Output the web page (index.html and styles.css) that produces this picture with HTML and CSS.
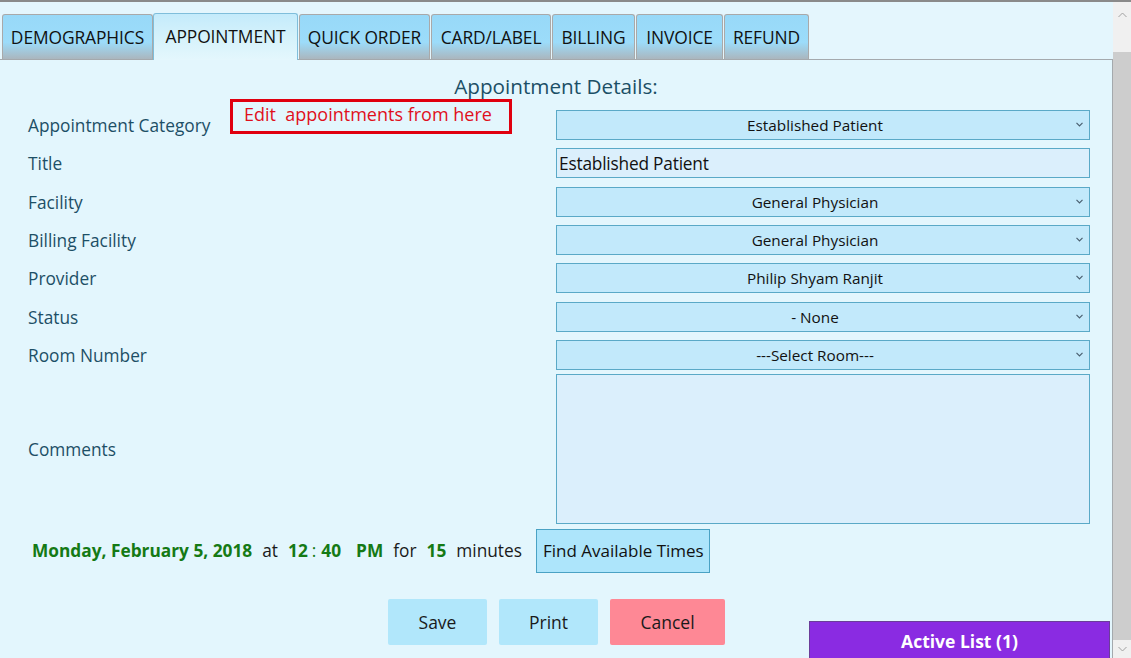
FILE: index.html
```html
<!DOCTYPE html>
<html>
<head>
<meta charset="utf-8">
<link rel="stylesheet" href="styles.css">
</head>
<body>
<div class="window">
  <div class="main">
    <div class="tabs">
      <div class="tab t-demo">DEMOGRAPHICS</div>
      <div class="tab active t-appt">APPOINTMENT</div>
      <div class="tab t-quick">QUICK ORDER</div>
      <div class="tab t-card">CARD/LABEL</div>
      <div class="tab t-bill">BILLING</div>
      <div class="tab t-inv">INVOICE</div>
      <div class="tab t-ref">REFUND</div>
    </div>
    <div class="panel">
      <h1 class="heading">Appointment Details:</h1>
      <div class="note">Edit&nbsp; appointments from here</div>
      <div class="form">
        <div class="label">Appointment Category</div>
        <div class="field select"><span>Established Patient</span><svg class="chev" width="7" height="5" viewBox="0 0 7 5"><path d="M0.5 0.8 L3.5 3.8 L6.5 0.8" fill="none" stroke="#4a6070" stroke-width="1.2"/></svg></div>

        <div class="label">Title</div>
        <div class="field text">Established Patient</div>

        <div class="label">Facility</div>
        <div class="field select"><span>General Physician</span><svg class="chev" width="7" height="5" viewBox="0 0 7 5"><path d="M0.5 0.8 L3.5 3.8 L6.5 0.8" fill="none" stroke="#4a6070" stroke-width="1.2"/></svg></div>

        <div class="label">Billing Facility</div>
        <div class="field select"><span>General Physician</span><svg class="chev" width="7" height="5" viewBox="0 0 7 5"><path d="M0.5 0.8 L3.5 3.8 L6.5 0.8" fill="none" stroke="#4a6070" stroke-width="1.2"/></svg></div>

        <div class="label">Provider</div>
        <div class="field select"><span>Philip Shyam Ranjit</span><svg class="chev" width="7" height="5" viewBox="0 0 7 5"><path d="M0.5 0.8 L3.5 3.8 L6.5 0.8" fill="none" stroke="#4a6070" stroke-width="1.2"/></svg></div>

        <div class="label">Status</div>
        <div class="field select"><span>- None</span><svg class="chev" width="7" height="5" viewBox="0 0 7 5"><path d="M0.5 0.8 L3.5 3.8 L6.5 0.8" fill="none" stroke="#4a6070" stroke-width="1.2"/></svg></div>

        <div class="label">Room Number</div>
        <div class="field select"><span>---Select Room---</span><svg class="chev" width="7" height="5" viewBox="0 0 7 5"><path d="M0.5 0.8 L3.5 3.8 L6.5 0.8" fill="none" stroke="#4a6070" stroke-width="1.2"/></svg></div>

        <div class="label comments-label">Comments</div>
        <div class="field area"></div>
      </div>
      <div class="when">
        <b class="g">Monday, February 5, 2018</b>
        <span>at</span>
        <b class="g">12</b><span class="colon">:</span><b class="g">40</b>
        <b class="g pm">PM</b>
        <span>for</span>
        <b class="g">15</b>
        <span class="last">minutes</span>
        <div class="find">Find Available Times</div>
      </div>
      <div class="actions">
        <div class="btn blue">Save</div>
        <div class="btn blue">Print</div>
        <div class="btn red">Cancel</div>
      </div>
      <div class="active-list">Active List (1)</div>
    </div>
  </div>
  <div class="scrollbar">
    <div class="sb-btn up"><svg width="9" height="6" viewBox="0 0 9 6"><path d="M0.5 5 L4.5 1 L8.5 5" fill="none" stroke="#a0a0a0" stroke-width="1"/></svg></div>
    <div class="sb-thumb"></div>
    <div class="sb-btn down"><svg width="9" height="6" viewBox="0 0 9 6"><path d="M0.5 1 L4.5 5 L8.5 1" fill="none" stroke="#a0a0a0" stroke-width="1"/></svg></div>
  </div>
</div>
</body>
</html>
```
FILE: styles.css
```css
html, body {
  margin: 0;
  padding: 0;
  background: #e4f6fd;
  font-family: "Open Sans", "Noto Sans", sans-serif;
}
.window {
  width: 1131px;
  height: 658px;
  box-sizing: border-box;
  border-top: 2px solid #8a8a8a;
  display: flex;
  overflow: hidden;
  background: #e4f6fd;
}
.main {
  width: 1113px;
  display: flex;
  flex-direction: column;
}
.tabs {
  display: flex;
  align-items: flex-end;
  padding-left: 2px;
  height: 57px;
  box-sizing: border-box;
  position: relative;
  z-index: 2;
}
.tab {
  height: 45px;
  box-sizing: border-box;
  border: 1px solid #a9a9a9;
  border-bottom: none;
  border-radius: 3px 3px 0 0;
  margin-right: 1px;
  display: flex;
  align-items: center;
  justify-content: center;
  font-size: 17.4px;
  color: #111;
  letter-spacing: -0.1px;
  background: linear-gradient(to bottom, #98d9f8 0%, #9cdcfa 62%, #aab6be 100%);
}
.t-demo { width: 151px; margin-right: 0; }
.t-appt { width: 145px; }
.t-quick { width: 131px; }
.t-card { width: 120px; }
.t-bill { width: 83px; }
.t-inv { width: 87px; }
.t-ref { width: 85px; }
.tab.active {
  height: 47px;
  padding-bottom: 2px;
  border-color: #7fbedb;
  background: linear-gradient(to bottom, #c4ebfb 0%, #d8f3fb 60%, #e4f7fd 100%);
  margin-bottom: -1px;
}
.panel {
  flex: 1;
  position: relative;
  border-top: 1px solid #a4a9ad;
  border-right: 1px solid #a4a9ad;
  background: #e3f6fd;
}
.heading {
  margin: 0;
  padding-top: 13px;
  height: 32px;
  text-align: center;
  font-weight: normal;
  font-size: 20.7px;
  color: #1b4f66;
  line-height: 26px;
}
.note {
  position: absolute;
  left: 230px;
  top: 39px;
  width: 282px;
  height: 35px;
  box-sizing: border-box;
  border: 3px solid #e0000f;
  color: #e0101c;
  font-size: 18px;
  padding: 1px 0 0 11px;
  line-height: 22px;
  white-space: nowrap;
}
.form {
  display: grid;
  grid-template-columns: 528px 534px;
  padding-left: 28px;
  row-gap: 8.33px;
  margin-top: 5px;
}
.label {
  height: 30px;
  display: flex;
  align-items: center;
  font-size: 17.3px;
  color: #1d4f66;
  box-sizing: border-box;
  padding-top: 1px;
}
.field {
  height: 30px;
  box-sizing: border-box;
  border: 1px solid #5aa9c7;
  font-size: 15.3px;
  color: #111;
  display: flex;
  align-items: center;
}
.select {
  background: #c2e9fb;
  justify-content: center;
  position: relative;
  padding-right: 16px;
}
.chev {
  position: absolute;
  right: 6px;
  top: 11px;
}
.text {
  background: #dbeffc;
  padding-left: 2px;
  font-size: 17.3px;
  letter-spacing: -0.2px;
}
.area {
  height: 150px;
  background: #dbeffc;
  margin-top: -4.33px;
}
.comments-label {
  height: 150px;
  margin-top: -4.33px;
}
.when {
  display: flex;
  align-items: center;
  padding-left: 32px;
  margin-top: 5px;
  height: 44px;
  font-size: 17.3px;
  color: #1a1a1a;
}
.when > * {
  margin-right: 10px;
}
.when .g {
  color: #157a15;
  font-weight: bold;
}
.when .colon {
  margin: 0 5px 0 -6px;
  color: #157a15;
}
.when .pm {
  margin-left: 5px;
}
.when .last {
  margin-right: 14px;
}
.find {
  height: 44px;
  box-sizing: border-box;
  border: 1px solid #4aa2c4;
  background: #ade5fb;
  padding: 0 5px 0 6px;
  display: flex;
  align-items: center;
  font-size: 17px;
  color: #111;
}
.actions {
  display: flex;
  justify-content: center;
  gap: 12px;
  margin-top: 26px;
  padding-left: 1px;
}
.btn {
  height: 46px;
  width: 99px;
  border-radius: 2px;
  display: flex;
  align-items: center;
  justify-content: center;
  font-size: 17.5px;
  color: #1a1a1a;
}
.btn.blue {
  background: #b1e7fb;
}
.btn.red {
  width: 115px;
  background: #fe8895;
}
.active-list {
  position: absolute;
  left: 809px;
  bottom: -2px;
  width: 301px;
  height: 39px;
  box-sizing: border-box;
  background: #8a2be2;
  border-top: 1px solid #6b3d99;
  border-left: 1px solid #6b3d99;
  border-right: 1px solid #6b3d99;
  color: #fff;
  font-weight: bold;
  font-size: 17.5px;
  display: flex;
  align-items: center;
  justify-content: center;
}
.scrollbar {
  width: 18px;
  display: flex;
  flex-direction: column;
  background: #f0f0f0;
}
.sb-btn {
  display: flex;
  justify-content: center;
}
.sb-btn.up {
  height: 50px;
  padding-top: 10px;
  box-sizing: border-box;
}
.sb-thumb {
  flex: 1;
  background: #cdcdcd;
}
.sb-btn.down {
  height: 18px;
  align-items: center;
}
```
